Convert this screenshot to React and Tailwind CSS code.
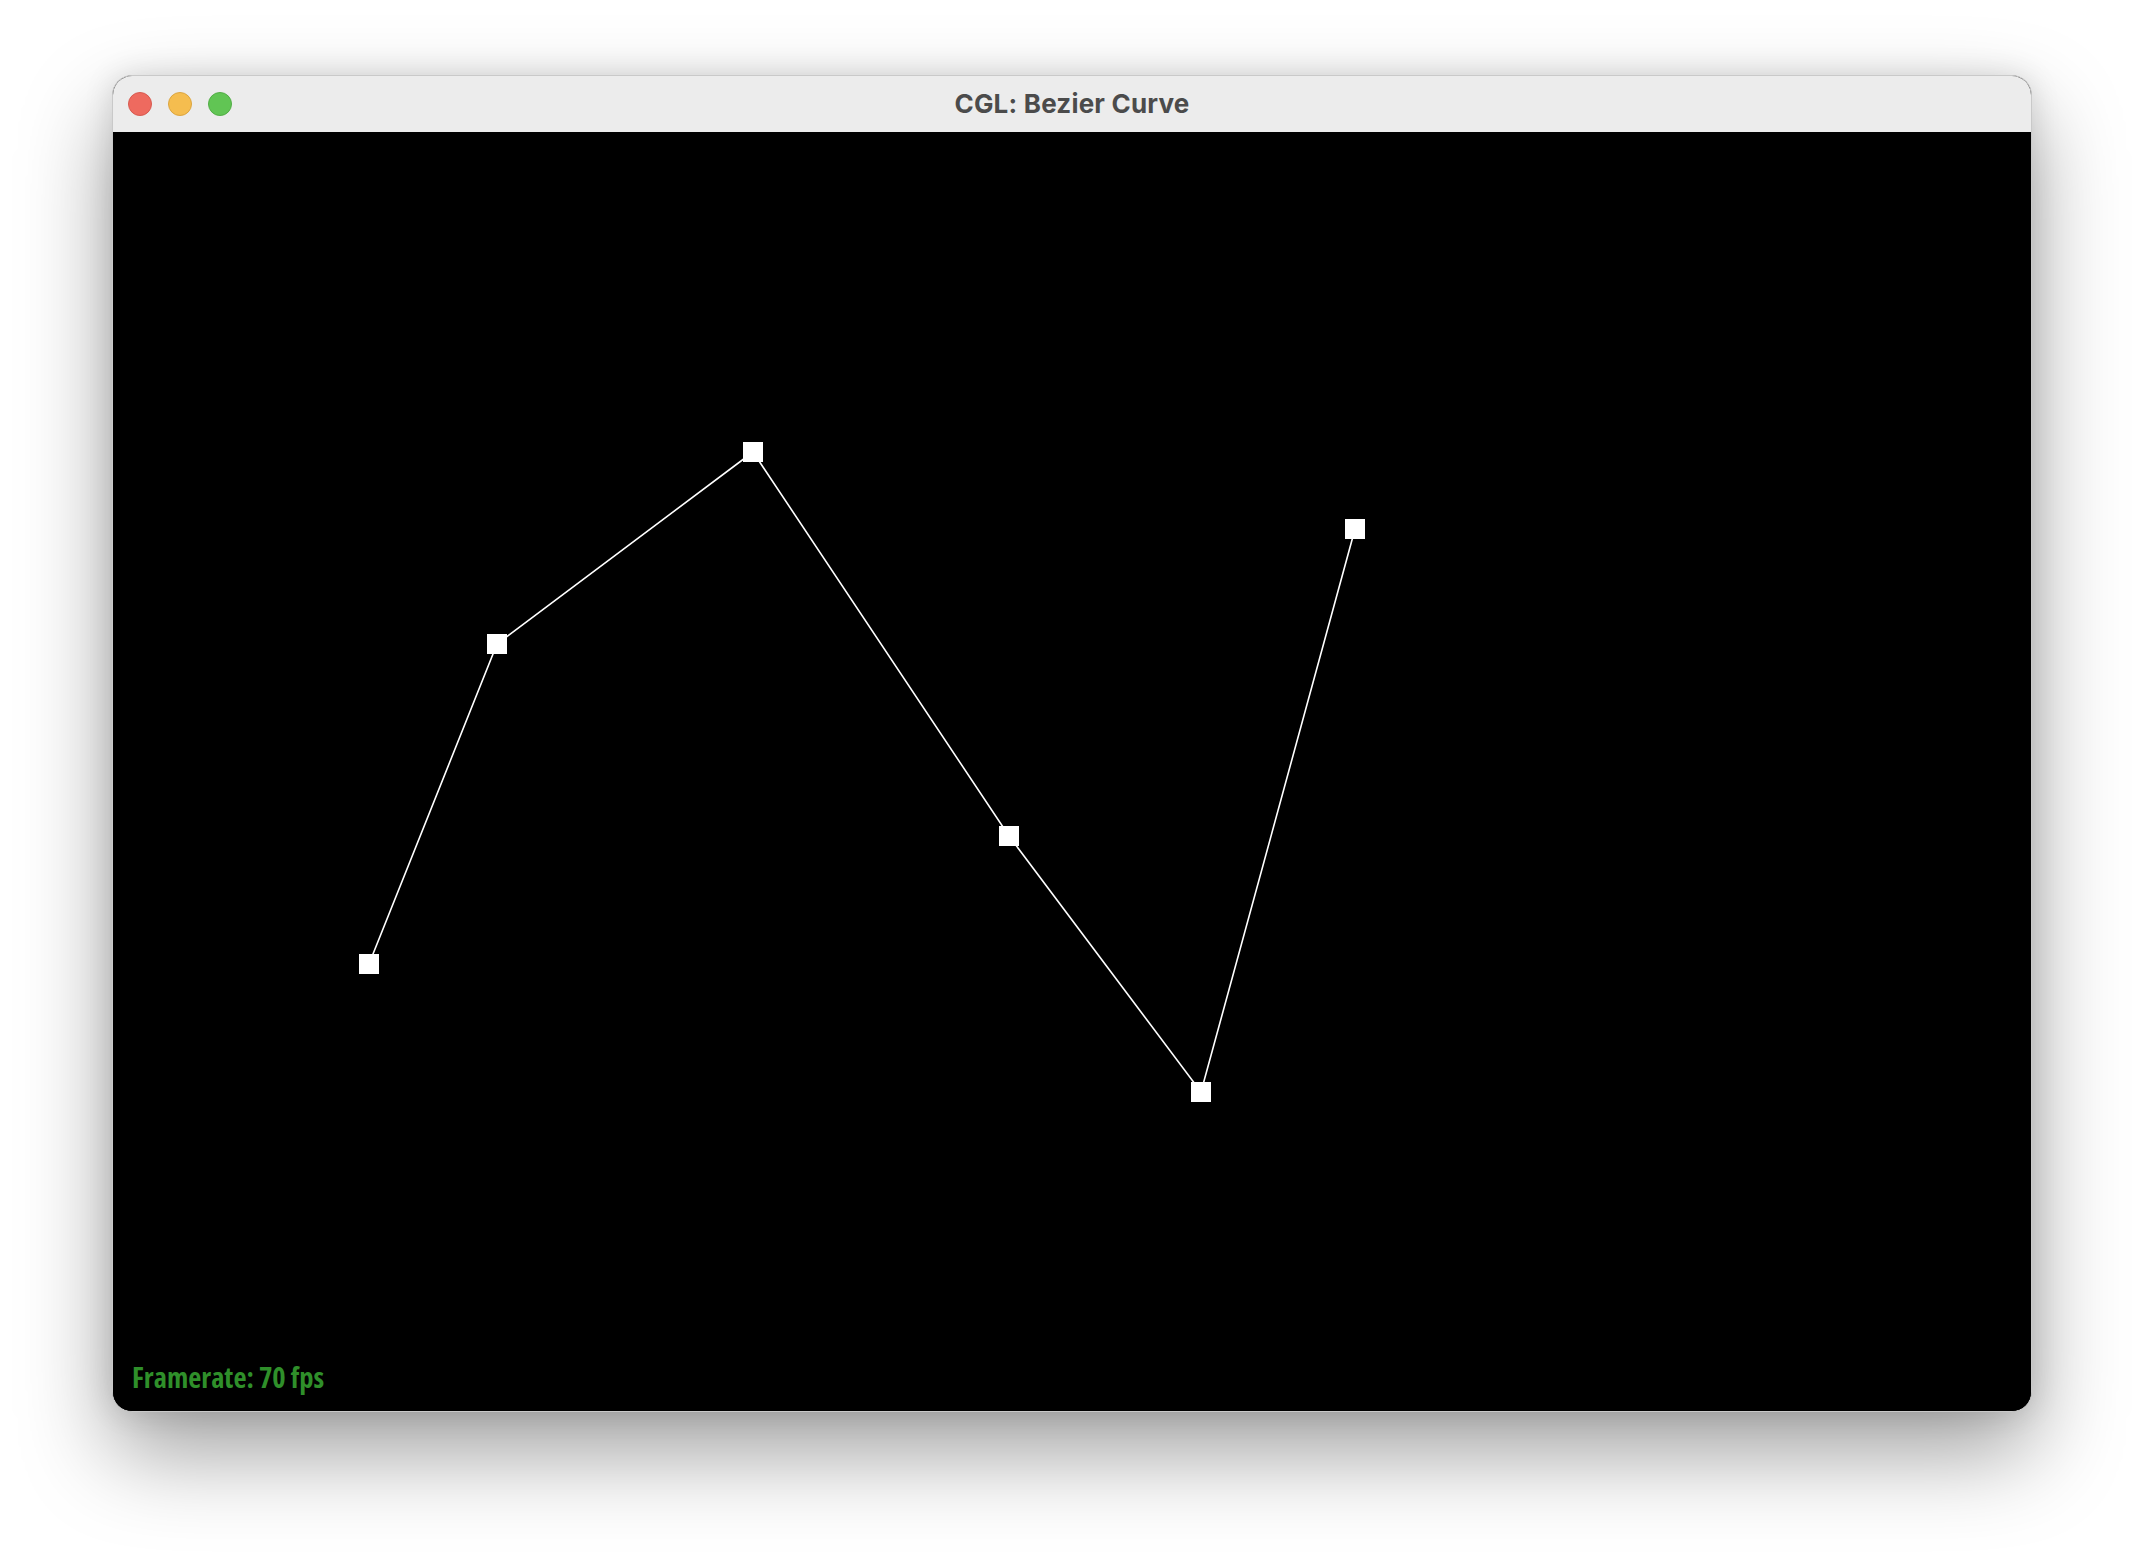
import React from "react";

const pts = [
  [256, 832],
  [384, 512],
  [640, 320],
  [896, 704],
  [1088, 960],
  [1242, 397],
];

export default function App() {
  return (
    <div className="w-[2144px] h-[1560px] bg-white pt-[75px] pl-[112px]">
      <div className="w-[1920px] h-[1337px] rounded-[20px] overflow-hidden border border-[#c9c9c9] shadow-[0_40px_90px_rgba(0,0,0,0.38),0_0_30px_rgba(0,0,0,0.12)] flex flex-col bg-black">
        <div className="h-[56px] shrink-0 bg-[#ececec] relative flex items-center justify-center pb-[2px]">
          <div className="absolute left-[15px] top-0 h-full flex items-center gap-[16px]">
            <div className="w-[24px] h-[24px] rounded-full bg-[#ee6a5f] border border-[#d75a50]" />
            <div className="w-[24px] h-[24px] rounded-full bg-[#f5bd4f] border border-[#dba540]" />
            <div className="w-[24px] h-[24px] rounded-full bg-[#61c554] border border-[#52ad46]" />
          </div>
          <span className="font-['Inter','Liberation_Sans',sans-serif] font-bold text-[26px] text-[#4b4b4b] tracking-[0.2px]">
            CGL: Bezier Curve
          </span>
        </div>
        <div className="relative flex-1 bg-black flex flex-col justify-end">
          <svg className="absolute inset-0" width="1920" height="1280" viewBox="0 0 1920 1280">
            <polyline
              points={pts.map((p) => p.join(",")).join(" ")}
              fill="none"
              stroke="#ffffff"
              strokeWidth="1.6"
            />
            {pts.map(([x, y], i) => (
              <rect key={i} x={x - 10} y={y - 10} width="20" height="20" fill="#ffffff" />
            ))}
          </svg>
          <div className="relative pl-[19px] pb-[15px] font-['Open_Sans',sans-serif] font-bold font-stretch-condensed text-[28.5px] leading-[38px] text-[#2f8f2a]">
            Framerate: 70 fps
          </div>
        </div>
      </div>
    </div>
  );
}
